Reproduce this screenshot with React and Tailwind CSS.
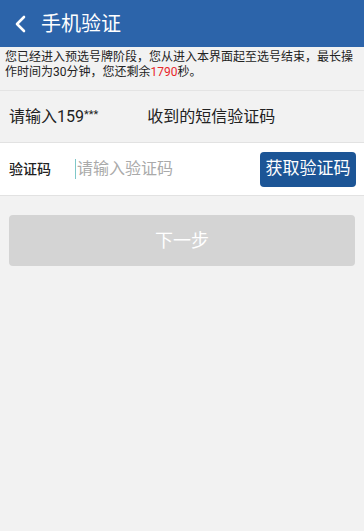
import React from "react";

export default function App() {
  const font = { fontFamily: '"Roboto", "Noto Sans CJK SC", sans-serif' };
  return (
    <div className="w-[364px] h-[531px] bg-[#f2f2f2] flex flex-col" style={font}>
      <div className="h-[47px] bg-[#2c64aa] flex items-center shrink-0">
        <svg width="14" height="20" viewBox="0 0 14 20" className="ml-[14px]">
          <path d="M10 3 L3 10 L10 17" stroke="#fff" strokeWidth="2.6" fill="none" strokeLinecap="round" strokeLinejoin="round" />
        </svg>
        <span className="ml-[13px] text-white text-[20px] leading-none">手机验证</span>
      </div>
      <div className="px-[5px] pt-[3px] pb-[4px] text-[12px] leading-[15px] text-[#222] border-b border-[#e4e4e4] h-[44px]">
        您已经进入预选号牌阶段，您从进入本界面起至选号结束，最长操作时间为30分钟，您还剩余<span className="text-[#e8262a]">1790</span>秒。
      </div>
      <div className="h-[52px] flex items-center px-[9px] pt-[1px] text-[16px] text-[#222] border-b border-[#e2e2e2]">
        <span>请输入159<span className="text-[11px] align-top relative top-[2px]">***</span></span>
        <span className="ml-[49px]">收到的短信验证码</span>
      </div>
      <div className="h-[53px] bg-white flex items-center pl-[9px] pr-[8px] border-b border-[#e2e2e2]">
        <span className="text-[14px] text-[#222] font-medium w-[66px]">验证码</span>
        <div className="flex-1 flex items-center">
          <span className="w-[1px] h-[20px] bg-[#7fc8c8] mr-[1px]"></span>
          <span className="text-[16px] text-[#aaa]">请输入验证码</span>
        </div>
        <div className="w-[96px] h-[35px] rounded-[4px] bg-[#1c5596] flex items-center justify-center text-white text-[17px]">
          获取验证码
        </div>
      </div>
      <div className="px-[9px] pt-[19px]">
        <div className="h-[51px] rounded-[4px] bg-[#d4d4d4] flex items-center justify-center text-white text-[18px]">
          下一步
        </div>
      </div>
    </div>
  );
}
